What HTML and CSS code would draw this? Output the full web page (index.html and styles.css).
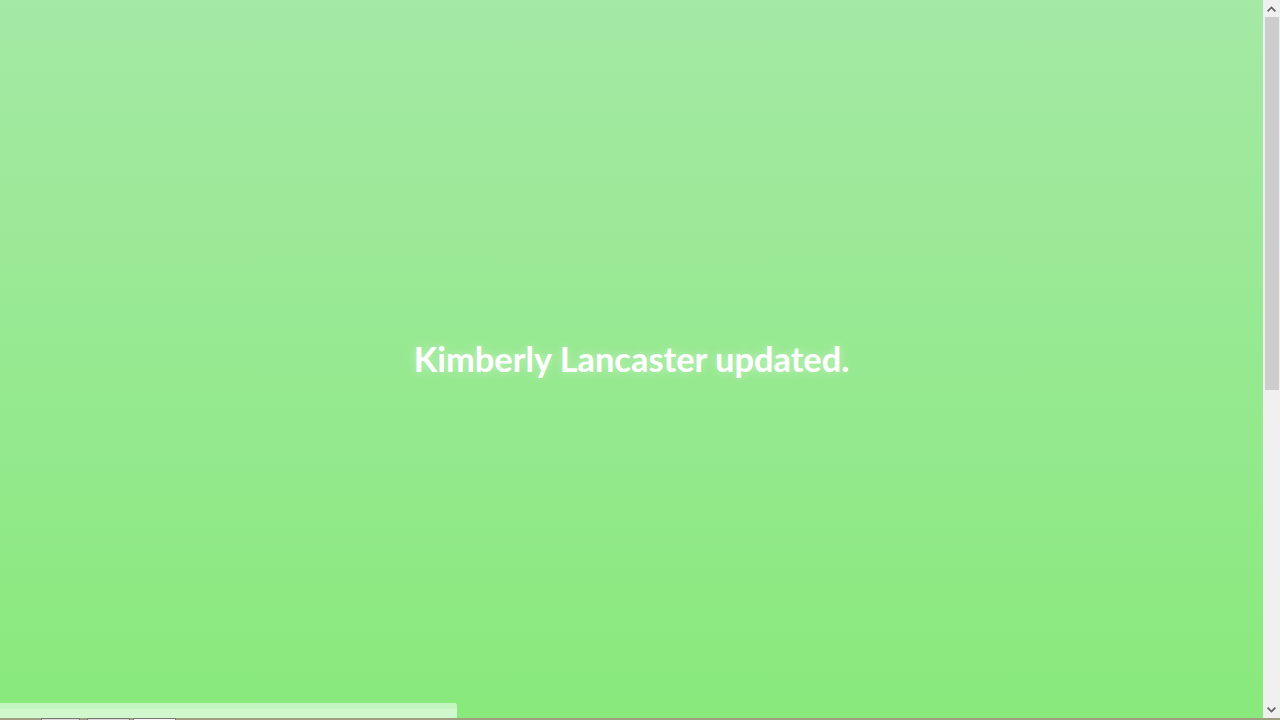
FILE: index.html
```html
<!DOCTYPE html>
<html lang="en">
<head>
<meta charset="utf-8">
<title>Updated</title>
<link rel="stylesheet" href="styles.css">
</head>
<body>
<div class="window">
  <main class="stage">
    <h1 class="message">Kimberly Lancaster updated.</h1>
    <div class="panel"><div class="panel-top"></div></div>
  </main>
  <div class="scrollbar" aria-hidden="true">
    <div class="sb-btn">
      <svg width="9" height="6" viewBox="0 0 9 6"><path d="M0.6 5.3 L4.5 1.4 L8.4 5.3" fill="none" stroke="#606060" stroke-width="1.7"/></svg>
    </div>
    <div class="sb-track">
      <div class="sb-thumb"></div>
    </div>
    <div class="sb-btn">
      <svg width="9" height="6" viewBox="0 0 9 6"><path d="M0.6 0.7 L4.5 4.6 L8.4 0.7" fill="none" stroke="#606060" stroke-width="1.7"/></svg>
    </div>
  </div>
  <footer class="strip">
    <span class="tab t1"></span>
    <span class="tab t2"></span>
    <span class="tab t3"></span>
  </footer>
</div>
</body>
</html>
```
FILE: styles.css
```css
html, body {
  margin: 0;
  padding: 0;
  overflow: hidden;
}
body {
  font-family: Lato, "Noto Sans", sans-serif;
  background: #89e97c;
}
.window {
  height: 720px;
  display: grid;
  grid-template-columns: 1fr 17px;
  grid-template-rows: 718px 2px;
}
.stage {
  position: relative;
  display: flex;
  align-items: center;
  justify-content: center;
  background: linear-gradient(to bottom, #a4e9a5 0%, #89e97c 100%);
}
.message {
  margin: 0 0 1px;
  color: #ffffff;
  font-size: 34.4px;
  font-weight: 700;
  letter-spacing: 0;
  text-shadow: 0 0 8px rgba(255, 255, 255, 0.35), 0 0 18px rgba(255, 255, 255, 0.2);
}
.panel {
  position: absolute;
  left: 0;
  bottom: 0;
  width: 457px;
  height: 15px;
  background: #d0f8cc;
  border-top-right-radius: 3px;
  overflow: hidden;
}
.panel-top {
  height: 6px;
  background: #c3f5c0;
}
.scrollbar {
  display: flex;
  flex-direction: column;
  background: #f0f0f0;
}
.sb-btn {
  height: 17px;
  display: flex;
  align-items: center;
  justify-content: center;
  flex: none;
}
.sb-track {
  flex: 1;
  padding: 0 1px 0 2px;
}
.sb-thumb {
  height: 373px;
  background: #cdcdcd;
}
.strip {
  grid-column: 1 / -1;
  position: relative;
  background: #9e9e80;
}
.tab {
  position: absolute;
  top: 0;
  height: 2px;
  box-sizing: border-box;
  border: 1px solid #777;
  border-bottom: none;
  background: #d8d8d8;
}
.t1 { left: 41px; width: 39px; }
.t2 { left: 87px; width: 43px; }
.t3 { left: 133px; width: 43px; background: #f4f4f4; }
```
